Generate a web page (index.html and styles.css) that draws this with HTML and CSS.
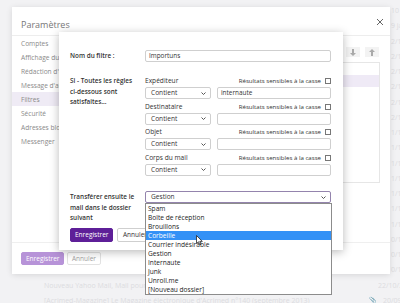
FILE: index.html
```html
<!DOCTYPE html>
<html lang="fr">
<head>
    <meta charset="UTF-8">
    <title>Paramètres</title>
    <link rel="stylesheet" href="styles.css">
</head>
<body>
    <div class="mail-list">
        <div class="mail-row"><span class="mail-subject"></span><span class="mail-date">10 janv.</span></div>
        <div class="mail-row"><span class="mail-subject"></span><span class="mail-date">9 janv.</span></div>
        <div class="mail-row"><span class="mail-subject"></span><span class="mail-date">2/12/2013</span></div>
        <div class="mail-row"><span class="mail-subject"></span><span class="mail-date">2/12/2013</span></div>
        <div class="mail-row"><span class="mail-subject"></span><span class="mail-date">2/12/2013</span></div>
        <div class="mail-row"><span class="mail-subject"></span><span class="mail-date">2/12/2013</span></div>
        <div class="mail-row"><span class="mail-subject"></span><span class="mail-date">2/11/2013</span></div>
        <div class="mail-row"><span class="mail-subject"></span><span class="mail-date">2/11/2013</span></div>
        <div class="mail-row"><span class="mail-subject"></span><span class="mail-date">1/11/2013</span></div>
        <div class="mail-row"><span class="mail-subject"></span><span class="mail-date">1/11/2013</span></div>
        <div class="mail-row"><span class="mail-subject"></span><span class="mail-date">1/11/2013</span></div>
        <div class="mail-row"><span class="mail-subject"></span><span class="mail-date">1/11/2013</span></div>
        <div class="mail-row"><span class="mail-subject"></span><span class="mail-date">1/11/2013</span></div>
        <div class="mail-row"><span class="mail-subject"></span><span class="mail-date">1/11/2013</span></div>
        <div class="mail-row"><span class="mail-subject"></span><span class="mail-date">1/11/2013</span></div>
        <div class="mail-row"><span class="mail-subject"></span><span class="mail-date">0/11/2013</span></div>
        <div class="mail-row"><span class="mail-subject"></span><span class="mail-date">0/11/2013</span></div>
        <div class="mail-row"><span class="mail-subject"></span><span class="mail-date">0/10/2013</span></div>
        <div class="mail-row"><span class="mail-subject">Nouveau Yahoo Mail, Mail pour iOS</span><span class="mail-date wide">22/10/2013</span></div>
        <div class="mail-row"><span class="mail-subject">[Acrimed-Magazine] Le Magazine électronique d'Acrimed n°140 (septembre 2013)</span><span class="clip">&#128206;</span><span class="mail-date mid">20/09/2013</span></div>
    </div>

    <div class="settings">
        <div class="settings-head">
            <h1>Paramètres</h1>
            <svg class="close" width="8" height="8" viewBox="0 0 8 8"><path d="M1 1L7 7M7 1L1 7" stroke="#666" stroke-width="1"/></svg>
        </div>
        <div class="settings-body">
            <ul class="side-nav">
                <li>Comptes</li>
                <li>Affichage du message</li>
                <li>Rédaction d'un message</li>
                <li>Message d'absence</li>
                <li class="active">Filtres</li>
                <li>Sécurité</li>
                <li>Adresses bloquées</li>
                <li>Messenger</li>
            </ul>
            <div class="filters-pane">
                <div class="order-btns">
                    <span class="order-btn"><svg width="6" height="7" viewBox="0 0 6 7"><path d="M2 0h2v4h2L3 7 0 4h2z" fill="#aaa"/></svg></span>
                    <span class="order-btn"><svg width="6" height="7" viewBox="0 0 6 7"><path d="M2 7h2V3h2L3 0 0 3h2z" fill="#aaa"/></svg></span>
                </div>
                <div class="filter-list">
                    <div class="filter-row"></div>
                    <div class="filter-row selected"></div>
                </div>
            </div>
        </div>
        <div class="settings-foot">
            <button class="btn btn-primary btn-disabled">Enregistrer</button>
            <button class="btn btn-plain btn-muted">Annuler</button>
        </div>
    </div>

    <div class="modal">
        <div class="filter-form">
            <label class="form-label center">Nom du filtre :</label>
            <div class="text-field">Importuns</div>

            <div class="form-label lines">Si - Toutes les règles <span class="nowrap">ci-dessous</span> sont satisfaites...</div>
            <div class="rules">
                <div class="rule">
                    <div class="rule-head"><span>Expéditeur</span><span class="case">Résultats sensibles à la casse <span class="checkbox"></span></span></div>
                    <div class="rule-fields"><div class="select small">Contient<svg class="chev" width="5" height="3" viewBox="0 0 5 3"><path d="M0.5 0.5L2.5 2.5 4.5 0.5" stroke="#555" fill="none"/></svg></div><div class="text-field grow">internaute</div></div>
                </div>
                <div class="rule">
                    <div class="rule-head"><span>Destinataire</span><span class="case">Résultats sensibles à la casse <span class="checkbox"></span></span></div>
                    <div class="rule-fields"><div class="select small">Contient<svg class="chev" width="5" height="3" viewBox="0 0 5 3"><path d="M0.5 0.5L2.5 2.5 4.5 0.5" stroke="#555" fill="none"/></svg></div><div class="text-field grow"></div></div>
                </div>
                <div class="rule">
                    <div class="rule-head"><span>Objet</span><span class="case">Résultats sensibles à la casse <span class="checkbox"></span></span></div>
                    <div class="rule-fields"><div class="select small">Contient<svg class="chev" width="5" height="3" viewBox="0 0 5 3"><path d="M0.5 0.5L2.5 2.5 4.5 0.5" stroke="#555" fill="none"/></svg></div><div class="text-field grow"></div></div>
                </div>
                <div class="rule">
                    <div class="rule-head"><span>Corps du mail</span><span class="case">Résultats sensibles à la casse <span class="checkbox"></span></span></div>
                    <div class="rule-fields"><div class="select small">Contient<svg class="chev" width="5" height="3" viewBox="0 0 5 3"><path d="M0.5 0.5L2.5 2.5 4.5 0.5" stroke="#555" fill="none"/></svg></div><div class="text-field grow"></div></div>
                </div>
            </div>

            <div class="form-label lines">Transférer ensuite le mail dans le dossier suivant</div>
            <div class="folder-pick">
                <div class="select focused">Gestion<svg class="chev" width="5" height="3" viewBox="0 0 5 3"><path d="M0.5 0.5L2.5 2.5 4.5 0.5" stroke="#555" fill="none"/></svg></div>
                <ul class="dropdown">
                    <li>Spam</li>
                    <li>Boîte de réception</li>
                    <li>Brouillons</li>
                    <li class="hover">Corbeille</li>
                    <li>Courrier indésirable</li>
                    <li>Gestion</li>
                    <li>Internaute</li>
                    <li>Junk</li>
                    <li>Unroll.me</li>
                    <li>[Nouveau dossier]</li>
                </ul>
                <svg class="cursor" width="7" height="11" viewBox="0 0 7 11"><path d="M0.5 0.5V8.5L2.5 6.8 3.8 9.8 5 9.3 3.8 6.4H6.3Z" fill="#fff" stroke="#222" stroke-width="0.8"/></svg>
            </div>
        </div>
        <div class="modal-actions">
            <button class="btn btn-primary">Enregistrer</button>
            <button class="btn btn-plain">Annuler</button>
        </div>
    </div>
</body>
</html>
```

FILE: styles.css
```css
* {
    box-sizing: border-box;
}
body {
    margin: 0;
    width: 400px;
    height: 303px;
    overflow: hidden;
    position: relative;
    background: #f2f2f4;
    font-family: "Open Sans", "Noto Sans", sans-serif;
    color: #333;
}

/* liste des mails derrière */
.mail-list {
    width: 400px;
    overflow: hidden;
    padding-top: 3px;
    color: #dcdce0;
    font-size: 7px;
}
.mail-row {
    height: 15.25px;
    display: flex;
    align-items: center;
    white-space: nowrap;
}
.mail-subject {
    flex: 1;
    padding-left: 44px;
    overflow: hidden;
}
.mail-date {
    flex: none;
    width: 9px;
    overflow: hidden;
}
.mail-date.wide {
    width: 22px;
}
.mail-date.mid {
    width: 17px;
}
.clip {
    flex: none;
    width: 14px;
    font-size: 6px;
}

/* panneau paramètres */
.settings {
    position: absolute;
    left: 12px;
    top: 7px;
    width: 378px;
    height: 267px;
    background: #fff;
    box-shadow: 0 1px 6px rgba(0, 0, 0, 0.12);
    display: flex;
    flex-direction: column;
}
.settings-head {
    height: 29px;
    flex: none;
    border-bottom: 1px solid #ededed;
    display: flex;
    justify-content: space-between;
    align-items: flex-start;
    padding: 11px 6px 0 9px;
}
.settings-head h1 {
    margin: 0;
    font-size: 9px;
    font-weight: 400;
    color: #777;
}
.settings-body {
    flex: 1;
    display: flex;
}
.side-nav {
    list-style: none;
    margin: 0;
    padding: 0;
    width: 110px;
}
.side-nav li {
    height: 14px;
    line-height: 15px;
    padding-left: 9px;
    font-size: 6.6px;
    color: #8a8a8a;
    white-space: nowrap;
}
.side-nav li.active {
    background: #efebf5;
}
.filters-pane {
    flex: 1;
    padding: 11px 10px 0 12px;
}
.order-btns {
    display: flex;
    justify-content: flex-end;
    gap: 5px;
    padding-right: 1px;
}
.order-btn {
    width: 14px;
    height: 10px;
    background: #f3f3f3;
    display: flex;
    align-items: center;
    justify-content: center;
}
.filter-list {
    margin-top: 5px;
    height: 121px;
    border: 1px solid #e6e6e6;
}
.filter-row {
    height: 12px;
}
.filter-row.selected {
    background: #efeaf6;
}
.settings-foot {
    height: 32px;
    flex: none;
    border-top: 1px solid #efefef;
    padding: 9px 9px;
    display: flex;
    gap: 3px;
}

/* boutons */
.btn {
    font-family: inherit;
    font-size: 6.5px;
    height: 14px;
    padding: 0 4px;
    border-radius: 2px;
    border: 1px solid #cfcfcf;
    background: #fff;
    color: #333;
}
.btn-primary {
    background: #5e1f98;
    border-color: #5e1f98;
    color: #fff;
    width: 43px;
}
.btn-disabled {
    background: #b793d8;
    border-color: #b793d8;
    height: 13px;
}
.btn-plain {
    width: 36px;
}
.btn-muted {
    color: #a0a0a0;
    border-color: #e2e2e2;
    width: 34px;
    height: 13px;
}

/* fenêtre filtre */
.modal {
    position: absolute;
    left: 59px;
    top: 32px;
    width: 284px;
    height: 218px;
    background: #fff;
    box-shadow: 0 2px 9px rgba(0, 0, 0, 0.28);
    padding: 18px 12px 0 11px;
}
.filter-form {
    display: grid;
    grid-template-columns: 75px 1fr;
    row-gap: 14px;
    align-items: start;
}
.form-label {
    font-size: 6.4px;
    font-weight: 600;
    color: #333;
    line-height: 10.5px;
}
.form-label.center {
    align-self: center;
}
.form-label.lines {
    padding-right: 2px;
}
.nowrap {
    white-space: nowrap;
}
.text-field {
    height: 12px;
    border: 1px solid #cfcfcf;
    border-radius: 2px;
    font-size: 6.4px;
    line-height: 10px;
    padding: 0 3px;
    color: #333;
}
.rule {
    margin-bottom: 2.5px;
}
.rule-head {
    height: 10px;
    line-height: 10px;
    display: flex;
    justify-content: space-between;
    font-size: 6.6px;
    margin-bottom: 1px;
}
.case {
    display: flex;
    align-items: center;
    gap: 4px;
    font-size: 6.1px;
}
.checkbox {
    width: 6px;
    height: 6px;
    border: 1px solid #777;
    background: #fff;
}
.rule-fields {
    display: flex;
    gap: 6px;
}
.grow {
    flex: 1;
}
.select {
    height: 12px;
    border: 1px solid #cfcfcf;
    border-radius: 2px;
    font-size: 6.6px;
    line-height: 10px;
    padding: 0 4px 0 5px;
    display: flex;
    justify-content: space-between;
    align-items: center;
    color: #333;
}
.select.small {
    width: 66px;
}
.select.focused {
    border-color: #9484ad;
}
.folder-pick {
    position: relative;
    margin-top: -1px;
}
.dropdown {
    position: absolute;
    top: 12px;
    left: 0;
    right: -1px;
    margin: 0;
    padding: 0;
    list-style: none;
    background: #fff;
    border: 1px solid #8c8c8c;
    z-index: 2;
}
.dropdown li {
    height: 9px;
    line-height: 9px;
    padding-left: 2px;
    font-size: 6.6px;
    color: #222;
    white-space: nowrap;
}
.dropdown li.hover {
    background: #3391f6;
    color: #fff;
}
.cursor {
    position: absolute;
    left: 51px;
    top: 44px;
    z-index: 3;
}
.modal-actions {
    display: flex;
    gap: 4px;
    margin-top: 4px;
}
```
